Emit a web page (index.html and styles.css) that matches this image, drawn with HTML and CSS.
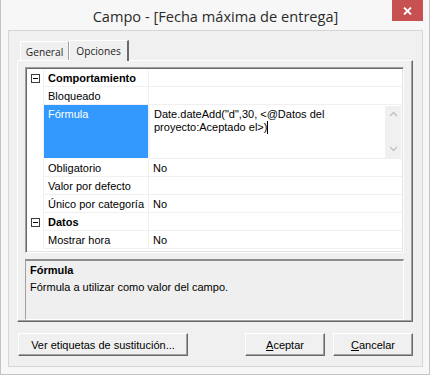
FILE: index.html
```html
<!DOCTYPE html>
<html>
<head>
    <title>Campo</title>
    <meta charset="utf-8">
    <link rel="stylesheet" href="styles.css">
</head>
<body>
    <div class="window">
        <div class="titlebar">
            <span class="title">Campo - [Fecha máxima de entrega]</span>
            <div class="close-btn">
                <svg width="9" height="8" viewBox="0 0 9 8"><path d="M1 0.5 L8 7.5 M8 0.5 L1 7.5" stroke="#fff" stroke-width="1.8"/></svg>
            </div>
        </div>

        <div class="client">
            <div class="tabs">
                <div class="tab tab-general">General</div>
                <div class="tab tab-opciones active">Opciones</div>
            </div>

            <div class="tab-panel">
                <div class="grid">
                    <div class="row category">
                        <div class="margin"><span class="expander"></span></div>
                        <div class="name">Comportamiento</div>
                        <div class="value"></div>
                    </div>
                    <div class="row">
                        <div class="margin"></div>
                        <div class="name">Bloqueado</div>
                        <div class="value"></div>
                    </div>
                    <div class="row tall">
                        <div class="margin"></div>
                        <div class="name selected">Fórmula</div>
                        <div class="value editor">
                            <div class="editor-text">Date.dateAdd("d",30, &lt;@Datos del<br>proyecto:Aceptado el&gt;)<span class="caret"></span></div>
                            <div class="scrollbar">
                                <svg width="9" height="6" viewBox="0 0 9 6"><path d="M1 5 L4.5 1.5 L8 5" fill="none" stroke="#c2c2c2" stroke-width="1.5"/></svg>
                                <svg width="9" height="6" viewBox="0 0 9 6"><path d="M1 1 L4.5 4.5 L8 1" fill="none" stroke="#c2c2c2" stroke-width="1.5"/></svg>
                            </div>
                        </div>
                    </div>
                    <div class="row">
                        <div class="margin"></div>
                        <div class="name">Obligatorio</div>
                        <div class="value">No</div>
                    </div>
                    <div class="row">
                        <div class="margin"></div>
                        <div class="name">Valor por defecto</div>
                        <div class="value"></div>
                    </div>
                    <div class="row">
                        <div class="margin"></div>
                        <div class="name">Único por categoría</div>
                        <div class="value">No</div>
                    </div>
                    <div class="row category">
                        <div class="margin"><span class="expander"></span></div>
                        <div class="name">Datos</div>
                        <div class="value"></div>
                    </div>
                    <div class="row">
                        <div class="margin"></div>
                        <div class="name">Mostrar hora</div>
                        <div class="value">No</div>
                    </div>
                </div>

                <div class="description">
                    <div class="desc-title">Fórmula</div>
                    <div class="desc-text">Fórmula a utilizar como valor del campo.</div>
                </div>
            </div>

            <div class="buttons">
                <button class="btn btn-wide">Ver etiquetas de sustitución...</button>
                <div class="spacer"></div>
                <button class="btn"><u>A</u>ceptar</button>
                <button class="btn"><u>C</u>ancelar</button>
            </div>
        </div>
    </div>
</body>
</html>
```

FILE: styles.css
```css
body {
    margin: 0;
    background-color: #fff;
}
.window {
    position: relative;
    width: 430px;
    height: 375px;
    box-sizing: border-box;
    padding: 0 6px 0 7px;
    background-color: #f7f7f7;
    border: 1px solid #c4c4c4;
    border-top: none;
    font-family: "Liberation Sans", Arial, sans-serif;
    font-size: 11px;
    color: #000;
}
.titlebar {
    height: 30px;
    display: flex;
    align-items: center;
    justify-content: center;
}
.title {
    font-family: "Open Sans", "Noto Sans", sans-serif;
    font-size: 14.6px;
    color: #2b2b2b;
    margin-top: 2px;
}
.close-btn {
    position: absolute;
    top: 0;
    left: 391px;
    width: 31px;
    height: 21px;
    background-color: #c75050;
    display: flex;
    align-items: center;
    justify-content: center;
}
.client {
    height: 337px;
    box-sizing: border-box;
    background-color: #f0f0f0;
    border: 1px solid #d6d6d6;
    padding: 8px 9px 0 8px;
}
.tabs {
    display: flex;
    align-items: flex-end;
    height: 21px;
    padding-left: 3px;
}
.tab {
    font-family: "Open Sans", "Noto Sans", sans-serif;
    font-size: 10.2px;
    color: #1e1e1e;
    height: 19px;
    box-sizing: border-box;
    padding-top: 3px;
    text-align: center;
    border: 1px solid #fff;
    border-bottom: none;
    border-right-color: #a0a0a0;
    background-color: #f0f0f0;
}
.tab-general {
    width: 49px;
}
.tab-opciones {
    width: 60px;
}
.tab.active {
    height: 21px;
    padding-top: 3px;
    border-right: 2px solid #696969;
    margin-bottom: -1px;
    position: relative;
    z-index: 1;
}
.tab-panel {
    height: 262px;
    box-sizing: border-box;
    border: 1px solid;
    border-color: #fff #696969 #696969 #fff;
    box-shadow: inset -1px -1px 0 #a0a0a0;
    padding: 6px 8px 0 7px;
}
.grid {
    height: 186px;
    box-sizing: border-box;
    background-color: #fff;
    border: 1px solid;
    border-color: #a0a0a0 #fff #fff #a0a0a0;
    box-shadow: inset 1px 1px 0 #696969, inset -1px -1px 0 #e3e3e3;
    padding: 1px 1px 0 1px;
}
.row {
    display: grid;
    grid-template-columns: 17px 105px 1fr;
    height: 18px;
}
.row.tall {
    height: 54px;
}
.margin {
    border-right: 1px solid #f0f0f0;
    display: flex;
    align-items: center;
    justify-content: center;
}
.name, .value {
    border-bottom: 1px solid #f0f0f0;
    padding: 3px 0 0 4px;
    white-space: nowrap;
    overflow: hidden;
}
.name {
    border-right: 1px solid #f0f0f0;
}
.category .name {
    font-weight: bold;
    overflow: visible;
}
.expander {
    position: relative;
    width: 7px;
    height: 7px;
    border: 1px solid #3c3c3c;
    background-color: #fff;
}
.expander::after {
    content: "";
    position: absolute;
    left: 1px;
    top: 3px;
    width: 5px;
    height: 1px;
    background-color: #000;
}
.name.selected {
    background-color: #3399ff;
    color: #fff;
    border-bottom-color: #fff;
}
.editor {
    display: flex;
    padding: 1px 1px 0 0;
}
.editor-text {
    flex: 1;
    padding: 2px 0 0 4px;
    line-height: 13px;
    border-left: 1px solid #f6f6f6;
}
.caret {
    display: inline-block;
    width: 1px;
    height: 13px;
    background-color: #000;
    vertical-align: top;
}
.scrollbar {
    width: 16px;
    height: 52px;
    background-color: #f0f0f0;
    display: flex;
    flex-direction: column;
    justify-content: space-between;
    align-items: center;
    padding: 5px 0 6px 0;
    box-sizing: border-box;
}
.description {
    height: 61px;
    box-sizing: border-box;
    margin-top: 6px;
    background-color: #efefef;
    border: 1px solid;
    border-color: #a0a0a0 #fff #fff #a0a0a0;
    border-top: 2px solid #8e8e8e;
    padding: 3px 4px;
}
.desc-title {
    font-weight: bold;
    margin-bottom: 5px;
}
.buttons {
    display: flex;
    gap: 8px;
    margin-top: 11px;
    padding-left: 1px;
}
.spacer {
    flex: 1;
}
.btn {
    height: 23px;
    width: 80px;
    box-sizing: border-box;
    font-family: "Liberation Sans", Arial, sans-serif;
    font-size: 11px;
    color: #000;
    background-color: #f0f0f0;
    border: 1px solid;
    border-color: #fff #696969 #696969 #fff;
    box-shadow: inset -1px -1px 0 #a0a0a0;
    padding: 0;
}
.btn-wide {
    width: 170px;
}
```
